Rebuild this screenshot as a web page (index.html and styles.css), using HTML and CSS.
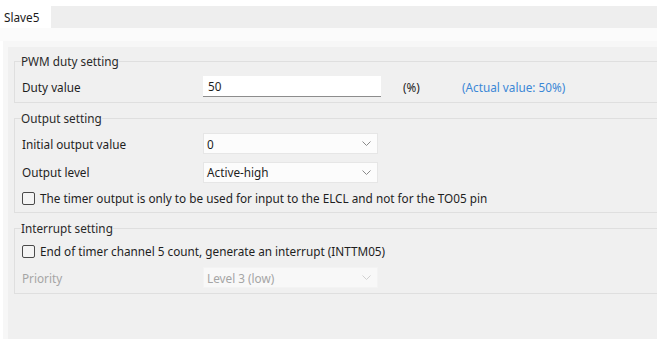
FILE: index.html
```html
<!DOCTYPE html>
<html>
<head>
<meta charset="utf-8">
<link rel="stylesheet" href="styles.css">
</head>
<body>
<div class="tabstrip"><div class="tab">Slave5</div></div>
<div class="gap-area"></div>
<div class="frame">
  <div class="panel">
    <fieldset class="group g1">
      <legend>PWM duty setting</legend>
      <div class="row">
        <span class="label">Duty value</span>
        <span class="input">50</span>
        <span class="unit">(%)</span>
        <span class="actual">(Actual value: 50%)</span>
      </div>
    </fieldset>
    <fieldset class="group g2">
      <legend>Output setting</legend>
      <div class="row">
        <span class="label">Initial output value</span>
        <span class="select"><span>0</span><svg class="chev" width="9" height="5" viewBox="0 0 9 5"><path d="M0.5 0.5 L4.5 4.5 L8.5 0.5" fill="none" stroke="#8a8a8a" stroke-width="1"/></svg></span>
      </div>
      <div class="row r2">
        <span class="label">Output level</span>
        <span class="select"><span>Active-high</span><svg class="chev" width="9" height="5" viewBox="0 0 9 5"><path d="M0.5 0.5 L4.5 4.5 L8.5 0.5" fill="none" stroke="#8a8a8a" stroke-width="1"/></svg></span>
      </div>
      <div class="check c1"><span class="box"></span><span>The timer output is only to be used for input to the ELCL and not for the TO05 pin</span></div>
    </fieldset>
    <fieldset class="group g3">
      <legend>Interrupt setting</legend>
      <div class="check"><span class="box"></span><span>End of timer channel 5 count, generate an interrupt (INTTM05)</span></div>
      <div class="row r3 disabled">
        <span class="label">Priority</span>
        <span class="select dis"><span>Level 3 (low)</span><svg class="chev" width="9" height="5" viewBox="0 0 9 5"><path d="M0.5 0.5 L4.5 4.5 L8.5 0.5" fill="none" stroke="#d0d0d0" stroke-width="1"/></svg></span>
      </div>
    </fieldset>
  </div>
</div>
</body>
</html>
```
FILE: styles.css
```css
html, body {
  margin: 0;
  padding: 0;
  background: #ffffff;
  overflow: hidden;
}
body {
  font-family: "Noto Sans", "Open Sans", sans-serif;
  font-size: 11.75px;
  color: #1e1e1e;
  padding-top: 6px;
}
.tabstrip {
  height: 22px;
  background: #eeeeee;
  display: flex;
}
.tab {
  width: 47px;
  padding-left: 4px;
  background: #ffffff;
  line-height: 22px;
  color: #1a1a1a;
}
.gap-area {
  height: 13px;
  background: #fbfbfb;
}
.frame {
  margin-left: 3px;
  padding: 6px 0 0 5px;
  background: #f7f7f7;
  height: 292px;
  overflow: hidden;
}
.panel {
  background: #f0f0f0;
  height: 292px;
  padding: 6px 0 0 6px;
  box-sizing: border-box;
}
.group {
  margin: 0 -20px 0 0;
  padding: 7px 0 5px 7px;
  border: 1px solid #dfdfdf;
  border-radius: 0;
  min-width: 0;
}
.group legend {
  padding: 0;
  margin-left: -1px;
  line-height: 16px;
  color: #2a2a2a;
}
.g2 { margin-top: 7px; padding-bottom: 6px; }
.g3 { margin-top: 7px; padding-bottom: 5px; }
.row {
  display: flex;
  align-items: center;
  height: 21px;
}
.r2 { margin-top: 7px; height: 22px; }
.label {
  width: 181px;
  flex: none;
}
.input {
  width: 178px;
  height: 21px;
  box-sizing: border-box;
  padding-left: 5px;
  background: #ffffff;
  border-bottom: 1px solid #8d8d8d;
  line-height: 21px;
  flex: none;
}
.unit {
  margin-left: 22px;
  width: 59px;
  flex: none;
}
.actual {
  color: #3b87d6;
}
.select {
  width: 175px;
  height: 21px;
  box-sizing: border-box;
  padding: 0 6px 0 3px;
  background: #fcfcfc;
  border: 1px solid #e6e6e6;
  display: flex;
  align-items: center;
  justify-content: space-between;
  flex: none;
}
.select.dis {
  background: #f8f8f8;
  border-color: #f3f3f3;
  color: #a5a5a5;
}
.disabled .label { color: #a5a5a5; }
.check {
  display: flex;
  align-items: center;
  height: 16px;
}
.c1 { margin-top: 7px; }
.r3 { margin-top: 8px; }
.box {
  width: 11px;
  height: 11px;
  border: 1px solid #4a4a4a;
  border-radius: 2px;
  background: #f4f4f4;
  margin-right: 5px;
  flex: none;
}
```
